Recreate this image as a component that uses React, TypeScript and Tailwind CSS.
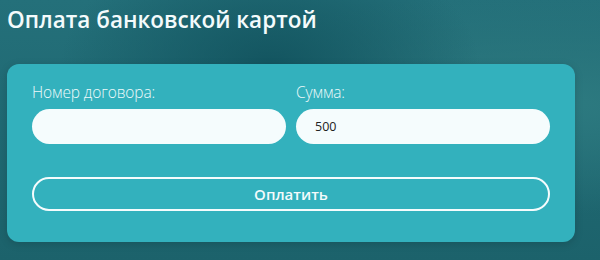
export default function App() {
  return (
    <div
      className="w-[600px] h-[260px] overflow-hidden px-[7px] pt-[5px] bg-[#1f6770] bg-[radial-gradient(ellipse_at_45%_25%,#135560_0%,rgba(19,85,96,0)_45%),radial-gradient(ellipse_at_92%_40%,#2d7a80_0%,rgba(45,122,128,0)_50%),linear-gradient(180deg,#24707a_0%,#1c626b_100%)]"
      style={{ fontFamily: '"Open Sans", "Liberation Sans", sans-serif' }}
    >
      <h1 className="text-[22.5px] leading-[30px] font-semibold text-[#f4fbfc]">
        Оплата банковской картой
      </h1>
      <div className="mt-[29px] w-[568px] rounded-[12px] bg-[#33b1bd] px-[25px] pt-[18px] pb-[31px] shadow-[0_2px_8px_rgba(0,0,0,0.15)]">
        <div className="grid grid-cols-2 gap-x-[10px]">
          <div className="flex flex-col">
            <label className="text-[15.5px] leading-[20px] font-[350] tracking-[-0.1px] text-[#eef9fa] mb-[7px]">
              Номер договора:
            </label>
            <input
              className="h-[35px] w-full rounded-full bg-[#f5fcfd] px-[19px] text-[12.5px] text-[#222] outline-none"
              defaultValue=""
            />
          </div>
          <div className="flex flex-col">
            <label className="text-[15.5px] leading-[20px] font-[350] tracking-[-0.1px] text-[#eef9fa] mb-[7px]">
              Сумма:
            </label>
            <input
              className="h-[35px] w-full rounded-full bg-[#f5fcfd] px-[19px] text-[12.5px] text-[#222] outline-none"
              defaultValue="500"
            />
          </div>
        </div>
        <button className="mt-[33px] flex h-[34px] w-full items-center justify-center rounded-full border-2 border-[#f5fcfd] text-[15px] font-semibold text-[#f4fbfc]">
          Оплатить
        </button>
      </div>
    </div>
  );
}
